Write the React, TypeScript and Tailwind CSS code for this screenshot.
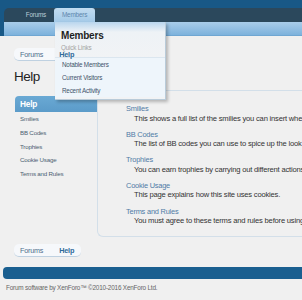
import React from 'react';

const sidebarLinks = ['Smilies', 'BB Codes', 'Trophies', 'Cookie Usage', 'Terms and Rules'];

const helpPages = [
  { title: 'Smilies', text: 'This shows a full list of the smilies you can insert when posting a message.' },
  { title: 'BB Codes', text: 'The list of BB codes you can use to spice up the look of your messages.' },
  { title: 'Trophies', text: 'You can earn trophies by carrying out different actions.' },
  { title: 'Cookie Usage', text: 'This page explains how this site uses cookies.' },
  { title: 'Terms and Rules', text: 'You must agree to these terms and rules before using the site.' },
];

const menuLinks = ['Notable Members', 'Current Visitors', 'Recent Activity'];

function Breadcrumb({ overlayHelp }: { overlayHelp?: boolean }) {
  return (
    <div className="flex items-center h-[13px] w-[67px] bg-[#f6f8fb] border-b border-[#bfd1e1] rounded-[5px] pl-[6px] gap-[16px] text-[7.2px] tracking-[-0.2px] leading-[13px]">
      <span className="text-[#4f6f8c]">Forums</span>
      <span className={`text-[7.3px] font-bold text-[#2f6a9a] ${overlayHelp ? 'relative z-20' : ''}`}>Help</span>
    </div>
  );
}

export default function App() {
  return (
    <div className="relative w-[302px] h-[300px] overflow-hidden bg-[#f0f0f0] font-['Liberation_Sans',sans-serif]">
      {/* header */}
      <div className="h-[8px] bg-[#185886]" />
      <div className="h-[14px] bg-[#185886] pl-[4px]">
        <div className="flex h-full bg-[#2b485c] rounded-tl-[5px]">
          <div className="w-[50px] flex items-center justify-end pr-[8px] text-[6.3px] tracking-[-0.2px] text-[#bccdda]">Forums</div>
          <div className="w-[41px] flex items-center pl-[8px] text-[6.4px] tracking-[-0.2px] text-[#5f87ad] bg-gradient-to-b from-[#c2dcf0] to-[#a4cae8] rounded-t-[3px]">
            Members
          </div>
        </div>
      </div>
      <div className="h-[14px] bg-[#185886] pl-[4px]">
        <div className="h-full bg-gradient-to-b from-[#a9cdea] to-[#7db2dc] border-b border-[#6fa6d2]" />
      </div>

      {/* page content */}
      <div className="pl-[14px] pt-[12px]">
        <Breadcrumb overlayHelp />
        <h1 className="mt-[8px] text-[13.5px] tracking-[-0.5px] leading-[16px] text-[#222]">Help</h1>

        <div className="mt-[5px] flex h-[147px]">
          <div className="w-[83px] shrink-0 pt-[6px] pl-[1px]">
            <div className="h-[16px] bg-gradient-to-b from-[#6aa9d4] to-[#5b9bc9] rounded-tl-[4px] pl-[5px] text-[8.3px] tracking-[-0.2px] leading-[16px] font-bold text-white">
              Help
            </div>
            {sidebarLinks.map(link => (
              <div key={link} className="h-[13.75px] pl-[5px] flex items-center text-[6.2px] tracking-[-0.2px] text-[#4c5f72] whitespace-nowrap">
                {link}
              </div>
            ))}
          </div>
          <div className="w-[220px] shrink-0 overflow-hidden border border-r-0 border-[#d3dfe9] rounded-bl-[6px] pl-[28px] pt-[13px]">
            {helpPages.map(page => (
              <div key={page.title} className="h-[25.65px] tracking-[-0.2px] leading-[9px] whitespace-nowrap">
                <div className="h-[9px] text-[7.4px] text-[#4f7ba6]">{page.title}</div>
                <div className="mt-[0.5px] pl-[8px] h-[9px] text-[7.6px] text-[#333]">{page.text}</div>
              </div>
            ))}
          </div>
        </div>

        <div className="mt-[7px]">
          <Breadcrumb />
        </div>
      </div>

      {/* footer */}
      <div className="mt-[10px] ml-[3px] h-[12px] bg-[#1a5f90] rounded-l-[4px]" />
      <div className="mt-[5px] pl-[6px] text-[6.4px] tracking-[-0.2px] leading-[8px] text-[#666]">
        Forum software by XenForo™ ©2010-2016 XenForo Ltd.
      </div>

      {/* members dropdown */}
      <div className="absolute left-[55px] top-[22px] w-[111px] h-[78px] z-10 bg-[linear-gradient(#b9d6ee_0px,#eef2f6_10px,#f1f3f5_36px)] border-r border-b border-[#b9cbd9] shadow-[2px_2px_3px_rgba(0,0,0,0.25)]">
        <div className="pl-[6px] pt-[8px] text-[10px] tracking-[-0.2px] leading-[12px] font-bold text-[#1e1e1e]">Members</div>
        <div className="pl-[6px] mt-[2px] text-[6.3px] tracking-[-0.2px] leading-[8px] text-[#a3a3a3]">Quick Links</div>
        <div className="mt-[5px] bg-[#eef5fb] border-t border-[#dbe6ef]">
          {menuLinks.map(link => (
            <div key={link} className="h-[13px] pl-[7px] flex items-center text-[6.3px] tracking-[-0.2px] text-[#3e536a]">
              {link}
            </div>
          ))}
        </div>
      </div>
    </div>
  );
}
